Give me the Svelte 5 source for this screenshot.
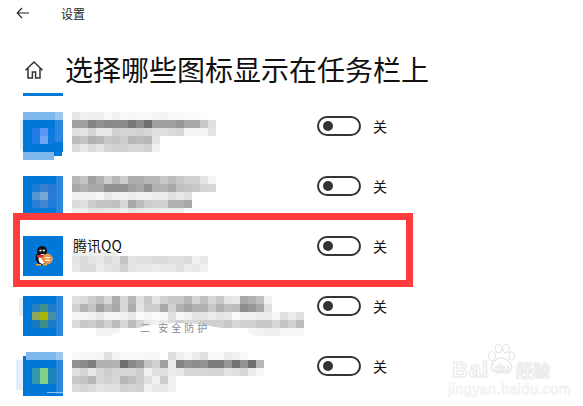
<script>
  // mosaic values are grey levels, one 8x8 cell each, "ff" = empty
  const blue = "#0078d7";
  const stripe = "#2b88de";
  const light = "#7fb8ea";
  const halo = "#e2eefa";

  const apps = [
    {
      shift: -4,
      shapes: [
        [-3, 4, 3, 30, halo],
        [0, -4, 40, 8, light],
        [0, 4, 40, 32, blue],
        [32, -4, 8, 8, "#9cc8ef"],
        [32, 4, 8, 22, stripe],
        [31, 36, 8, 4, blue],
        [0, 36, 31, 8, light],
        [9, 12, 8, 16, "#1f7be6"],
        [17, 12, 8, 8, "#5a94f5"],
        [17, 20, 8, 8, "#70a4f5"],
        [25, 12, 7, 16, "#0d78de"]
      ],
      blur: [
        "e6 f0 ef ef fa f0 f9 f8 fa fa f5 f2 fa fa fb fb fd ff",
        "a0 a0 84 90 88 8a 8a 78 8a 70 a0 a0 a0 98 a8 a8 c8 e0",
        "e0 e4 d4 e8 e8 d0 d4 d4 d0 d8 e0 e0 dc d8 f4 f4 f4 e4",
        "bc c4 b0 b8 c8 c4 cc b8 bc b8 e4",
        "dc e8 dc e4 d4 d0 d0 d8 d8 d0 f0"
      ]
    },
    {
      shift: 0,
      shapes: [
        [0, 0, 40, 40, blue],
        [33, 0, 7, 40, stripe],
        [9, 8, 8, 8, "#1a7ad8"],
        [17, 8, 8, 8, "#3a80cc"],
        [25, 8, 8, 8, "#2a78d0"],
        [9, 16, 8, 8, "#4f96d2"],
        [17, 16, 8, 8, "#78a8d2"],
        [25, 16, 8, 8, "#2b7bd4"],
        [9, 24, 8, 8, "#2a7fd6"],
        [17, 24, 8, 8, "#3f88cf"],
        [25, 24, 8, 8, "#1f7bd8"]
      ],
      blur: [
        "b8 c4 a0 b0 cc b8 cc ac ac b8 b8 c8 bc c8 d0 d0 e4 f4",
        "a8 b0 a8 a8 90 90 90 a0 a8 90 b0 b4 a8 c0 c4 c8 d4 d8",
        "f0 f0 f0 f8 e8 f0 f0 ec f0 f0 ec ec e0 e8 e0",
        "dc e0 cc c4 c4 c0 d8 a8 bc cc d0 d0 b0 b0 a8",
        "f0 f0 e4 e4 e8 e8 f0 e4 e8 ec ec f0 f0 f0"
      ]
    },
    {
      shift: 0,
      qq: true,
      name: "腾讯QQ",
      blur: [
        "e4 dc e4 e8 dc e4 c4 e4 e0 e0 dc dc e0 e0 dc f0 e8",
        "e8 dc dc ec e4 e0 d0 e4 e8 e8 ec e8 e8 e0 ec e8 f0"
      ]
    },
    {
      shift: 0,
      smudge: true,
      shapes: [
        [-4, 2, 4, 18, halo],
        [0, 0, 40, 40, blue],
        [33, 0, 7, 40, stripe],
        [9, 8, 8, 8, "#2a80be"],
        [17, 8, 8, 8, "#3f8f8a"],
        [25, 8, 8, 8, "#1f7bc8"],
        [9, 16, 8, 8, "#8aa860"],
        [17, 16, 8, 8, "#aab50a"],
        [25, 16, 8, 8, "#4a8fa0"],
        [9, 24, 8, 8, "#1a7ac0"],
        [17, 24, 8, 8, "#3f8f88"],
        [25, 24, 8, 8, "#1b7bc8"]
      ],
      blur: [
        "e0 dc cc c0 d8 ac d8 b8 e0 c8 e4 d0 c8 c8 b8 d4 c0 d8 c8 e4 e8 a8 b0 c0 f0",
        "d0 b4 c4 a0 b8 a8 d8 ac e4 cc cc a8 d0 b0 a4 b0 b0 c8 b0 c0 bc 8c 98 a8 e0",
        "f4 f4 f0 e8 f4 f4 f0 e8 fc f4 fc f8 e0 f8 f0 e4 e4 ec e4 e8 fc f0 f0 ec ec f8 e0 ec e0",
        "dc c8 cc c0 d0 bc d8 bc d4 e8 f0 e8 dc d0 d8 d8 cc d0 d0 c8 d8 d0 d0 c8 c8 d8 c4 d0 bc",
        "ff ff ff f2 f2 f2 ff ff ff ff ff ff ff ff ff ff ff ff ff ff ff ff f6 f2 ee ee f6 f8 f8"
      ]
    },
    {
      shift: -4,
      shapes: [
        [-7, 4, 7, 30, halo],
        [3, -4, 37, 8, light],
        [0, 4, 40, 36, blue],
        [33, -4, 7, 8, "#9cc8ef"],
        [33, 4, 7, 34, stripe],
        [0, 0, 3, 4, blue],
        [9, 12, 8, 16, "#3298b0"],
        [17, 12, 8, 16, "#82cf88"],
        [25, 12, 8, 16, "#1a84b4"],
        [24, 36, 16, 1, "#8fc2ee"]
      ],
      blur: [
        "fa f6 f6 f4 e0 f2 fa fa fa f8 f8 ff de ee f6 ec e0 fa fa ec f0 fa",
        "90 8a 7e b0 b0 b4 6e 88 98 c4 d0 a0 ec 84 94 8c 94 7c 7c 98 74 94 70 b8",
        "e0 d4 e8 d8 cc d4 d8 d8 cc f0 e0 e0 ec e8 d8 d8 d8 d4 d4 e4 e0 d8 ec f8",
        "c8 c4 b8 d8 d0 d8 b8 c0 cc e0 f0 cc f0",
        "dc d4 dc e4 e0 e0 d0 d4 d0 f0 e8 e8 f0"
      ]
    }
  ];

  const cells = (line) => line.split(" ").map((v) => `#${v}${v}${v}`);
</script>

<div class="page">
  <header class="topbar">
    <svg class="back" width="14" height="12" viewBox="0 0 14 12" fill="none" stroke="#222" stroke-width="1.1">
      <path d="M13 6H1.2M6 1 1.2 6 6 11" />
    </svg>
    <span>设置</span>
  </header>

  <div class="heading">
    <div class="home">
      <svg width="20" height="20" viewBox="0 0 20 20" fill="none" stroke="#333" stroke-width="1.5">
        <path d="M1.5 10.2 10 2l8.5 8.2M4 8v10h4.4v-6h3.2v6H16V8" />
      </svg>
    </div>
    <h1>选择哪些图标显示在任务栏上</h1>
  </div>

  <ul class="list">
    {#each apps as app}
      <li class="row">
        {#if app.qq}
          <svg class="icon" width="40" height="40" viewBox="0 0 40 40">
            <rect width="40" height="40" fill={blue} />
            <ellipse cx="19" cy="15.5" rx="5" ry="5.5" fill="#111" />
            <ellipse cx="18.5" cy="22" rx="6" ry="6.5" fill="#111" />
            <ellipse cx="19.5" cy="23" rx="4" ry="5" fill="#fff" />
            <circle cx="17.5" cy="14.5" r="1.1" fill="#fff" />
            <circle cx="20.8" cy="14.5" r="1.1" fill="#fff" />
            <path d="M14 19h10l-1 2.5h-2.5l-.5 3-2-3H14z" fill="#d9262c" />
            <path d="M13 28h5v1.6h-5zM20 28h4v1.6h-4z" fill="#f5a623" />
            <circle cx="24.5" cy="23" r="5" fill="#ef8f3c" stroke="#f7b27a" stroke-width=".6" />
            <path d="M22 21.6h5M22 24.4h5" stroke="#fff" stroke-width="1.2" />
          </svg>
        {:else}
          <svg class="icon" width="40" height="40" viewBox="0 0 40 40">
            {#each app.shapes as [x, y, w, h, fill]}
              <rect {x} {y} width={w} height={h} {fill} />
            {/each}
          </svg>
        {/if}

        <div class="info" style="margin-top: {app.shift}px">
          {#if app.name}
            <div class="name">{app.name}</div>
            <div class="hump"></div>
          {/if}
          {#each app.blur as line}
            <div class="mosaic">
              {#each cells(line) as color}
                <i style="background: {color}"></i>
              {/each}
            </div>
          {/each}
          {#if app.smudge}
            <svg class="swoop" width="150" height="18" viewBox="0 0 150 18">
              <path d="M0 16C20 12 40 5 66 5c30 0 54 8 74 11v2H0z" fill="#fff" />
            </svg>
            <span class="ghost">二 安全防护</span>
          {/if}
        </div>

        <div class="toggle"><b></b></div>
        <span class="state">关</span>
      </li>
    {/each}
  </ul>

  <div class="highlight"></div>

  <div class="watermark">
    <svg class="paw" width="28" height="31" viewBox="0 0 34 36" fill="#fff" stroke="#e6e6e6" stroke-width="1.5">
      <ellipse cx="6" cy="15" rx="4" ry="5.5" />
      <ellipse cx="14" cy="6" rx="4" ry="5" />
      <ellipse cx="23" cy="6" rx="4" ry="5" />
      <ellipse cx="30" cy="15" rx="3.5" ry="5" />
      <path d="M5 29c0-6 7-12 12-12s13 6 13 12c0 4-3 5-6 5H11c-3 0-6-1-6-5z" />
    </svg>
    <span class="mark-bai">Bai</span>
    <span class="mark-du">du</span>
    <span class="mark-cn">经验</span>
    <span class="mark-url">jingyan.baidu.com</span>
  </div>
</div>

<style>
  :global(body) {
    background: #fff;
  }

  .page {
    position: relative;
    width: 583px;
    height: 406px;
    overflow: hidden;
    background: #fff;
    color: #111;
    font-family: "Noto Sans CJK SC", "Liberation Sans", sans-serif;
  }

  .topbar {
    display: flex;
    align-items: center;
    height: 26px;
    padding-left: 16px;
    font-size: 12px;
    color: #222;
  }

  .back {
    margin-right: 31px;
    margin-bottom: 1px;
  }

  .heading {
    display: flex;
    height: 44px;
    margin-top: 26px;
    padding-left: 23px;
  }

  .home {
    width: 40px;
    height: 44px;
    padding: 8px 0 0 1px;
    box-sizing: border-box;
    border-bottom: 3px solid #0078d7;
    margin-right: 2px;
  }

  h1 {
    margin: 0;
    font-size: 28px;
    font-weight: 400;
    line-height: 34px;
    color: #111;
    white-space: nowrap;
  }

  .list {
    list-style: none;
    margin: 20px 0 0;
    padding: 0 0 0 23px;
  }

  .row {
    display: flex;
    align-items: flex-start;
    height: 60px;
  }

  .icon {
    flex: none;
    overflow: visible;
  }

  .info {
    position: relative;
    flex: none;
    width: 245px;
    margin-left: 9px;
  }

  .name {
    height: 20px;
    font-size: 14px;
    line-height: 19px;
    color: #111;
    margin-left: 1px;
  }

  .hump {
    width: 46px;
    height: 4px;
    margin-top: -4px;
    background: #eee;
    border-radius: 12px 24px 0 0;
  }

  .mosaic {
    display: flex;
    height: 8px;
  }

  .mosaic i {
    flex: none;
    width: 8px;
    height: 8px;
  }

  .swoop {
    position: absolute;
    left: 40px;
    top: 22px;
  }

  .ghost {
    position: absolute;
    left: 68px;
    top: 26px;
    font-size: 10px;
    line-height: 11px;
    letter-spacing: 3px;
    color: #8a8a8a;
    white-space: nowrap;
  }

  .toggle {
    flex: none;
    display: flex;
    align-items: center;
    width: 44px;
    height: 20px;
    padding-left: 4px;
    box-sizing: border-box;
    border: 2px solid #333;
    border-radius: 10px;
  }

  .toggle b {
    width: 10px;
    height: 10px;
    border-radius: 50%;
    background: #333;
  }

  .state {
    margin-left: 12px;
    font-size: 14px;
    line-height: 20px;
    color: #111;
  }

  .highlight {
    position: absolute;
    left: 13px;
    top: 213px;
    width: 400px;
    height: 74px;
    box-sizing: border-box;
    border: 7px solid #ff3b3b;
  }

  .watermark {
    position: absolute;
    left: 448px;
    top: 343px;
    width: 110px;
    height: 55px;
    color: #fff;
    font-family: "Liberation Sans", sans-serif;
    font-weight: 700;
  }

  .watermark span {
    position: absolute;
    white-space: nowrap;
    -webkit-text-stroke: 1px #e8e8e8;
  }

  .paw {
    position: absolute;
    left: 39px;
    top: 0;
  }

  .mark-bai {
    left: 4px;
    top: 14px;
    font-size: 22px;
    letter-spacing: 1px;
  }

  .mark-du {
    left: 46px;
    top: 18px;
    font-size: 13px;
  }

  .mark-cn {
    left: 68px;
    top: 14px;
    font-size: 17px;
    font-family: "Noto Sans CJK SC", sans-serif;
  }

  .mark-url {
    left: 0;
    top: 38px;
    font-size: 14px;
    font-weight: 400;
    letter-spacing: 0.6px;
  }

  .watermark .mark-url {
    -webkit-text-stroke: 0.6px #ececec;
  }
</style>
